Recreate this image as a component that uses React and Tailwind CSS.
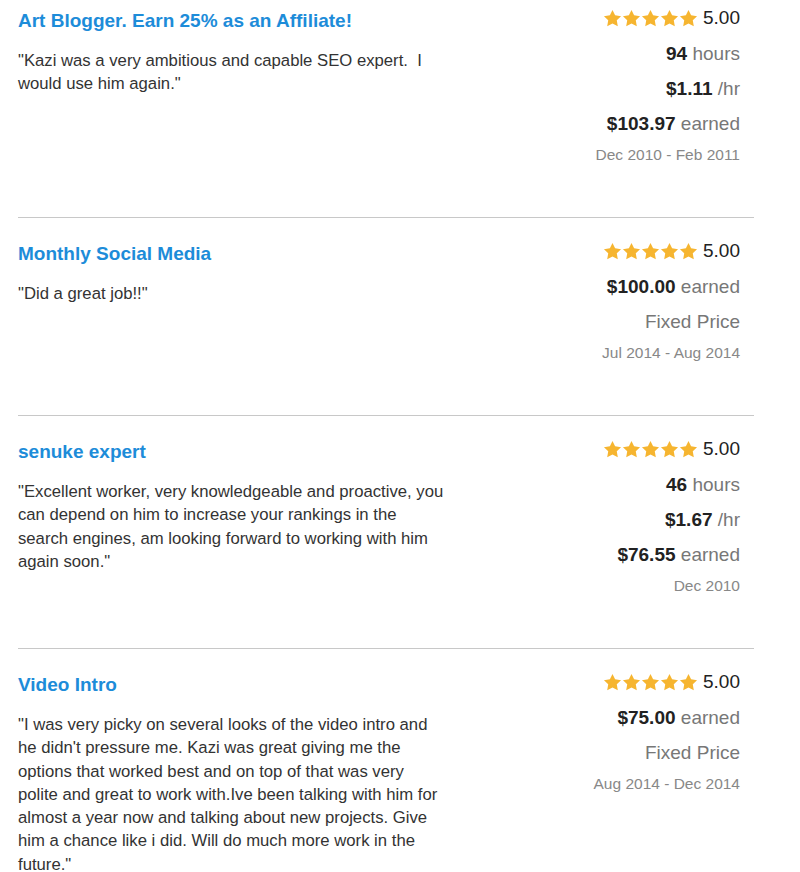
import { Fragment } from 'react'

const reviews = [
  {
    title: 'Art Blogger. Earn 25% as an Affiliate!',
    quote: '"Kazi was a very ambitious and capable SEO expert.\u00a0 I would use him again."',
    stats: [
      ['94', 'hours'],
      ['$1.11', '/hr'],
      ['$103.97', 'earned'],
    ],
    dates: 'Dec 2010 - Feb 2011',
  },
  {
    title: 'Monthly Social Media',
    quote: '"Did a great job!!"',
    stats: [['$100.00', 'earned']],
    fixed: true,
    dates: 'Jul 2014 - Aug 2014',
  },
  {
    title: 'senuke expert',
    quote:
      '"Excellent worker, very knowledgeable and proactive, you can depend on him to increase your rankings in the search engines, am looking forward to working with him again soon."',
    stats: [
      ['46', 'hours'],
      ['$1.67', '/hr'],
      ['$76.55', 'earned'],
    ],
    dates: 'Dec 2010',
  },
  {
    title: 'Video Intro',
    quote:
      '"I was very picky on several looks of the video intro and he didn\'t pressure me. Kazi was great giving me the options that worked best and on top of that was very polite and great to work with.Ive been talking with him for almost a year now and talking about new projects. Give him a chance like i did. Will do much more work in the future."',
    stats: [['$75.00', 'earned']],
    fixed: true,
    dates: 'Aug 2014 - Dec 2014',
  },
]

function Star() {
  return (
    <svg viewBox="0 0 24 24" className="h-[19px] w-[19px]" fill="#f6b530">
      <path d="M12 1.2l3.3 6.8 7.5 1.1-5.4 5.2 1.3 7.4L12 18.2l-6.7 3.5 1.3-7.4L1.2 9.1l7.5-1.1z" />
    </svg>
  )
}

function Rating() {
  return (
    <div className="flex h-[35px] items-center justify-end">
      <div className="flex">
        {[0, 1, 2, 3, 4].map((i) => (
          <Star key={i} />
        ))}
      </div>
      <span className="ml-[5px] text-[19px] text-[#222]">5.00</span>
    </div>
  )
}

function ReviewRow({ review, first, last }) {
  return (
    <div className={`flex justify-between ${first ? 'pt-0' : 'pt-[15px]'} ${last ? 'pb-0' : 'pb-[48px]'}`}>
      <div className="w-[429px] pt-[9px]">
        <h3 className="text-[19px] font-bold leading-[24px] text-[#1d8cd9]">{review.title}</h3>
        <p className="mt-[16px] text-[16.7px] leading-[23.3px] text-[#333]">{review.quote}</p>
      </div>
      <div className="pr-[14px] pt-[1px] text-right">
        <Rating />
        {review.stats.map(([value, unit]) => (
          <div key={unit} className="h-[35px] text-[19px] leading-[35px]">
            <span className="font-bold text-[#222]">{value}</span>{' '}
            <span className="text-[#777]">{unit}</span>
          </div>
        ))}
        {review.fixed && (
          <div className="h-[35px] text-[19px] leading-[35px] text-[#777]">Fixed Price</div>
        )}
        <div className="h-[28px] text-[15.5px] leading-[28px] text-[#888]">{review.dates}</div>
      </div>
    </div>
  )
}

export default function App() {
  return (
    <div className="min-h-screen bg-white font-[family-name:'Liberation_Sans',Arial,sans-serif]">
      <div className="ml-[18px] w-[736px]">
        {reviews.map((review, i) => (
          <Fragment key={review.title}>
            {i > 0 && <hr className="border-0 border-t border-[#c8c8c8]" />}
            <ReviewRow review={review} first={i === 0} last={i === reviews.length - 1} />
          </Fragment>
        ))}
      </div>
    </div>
  )
}
